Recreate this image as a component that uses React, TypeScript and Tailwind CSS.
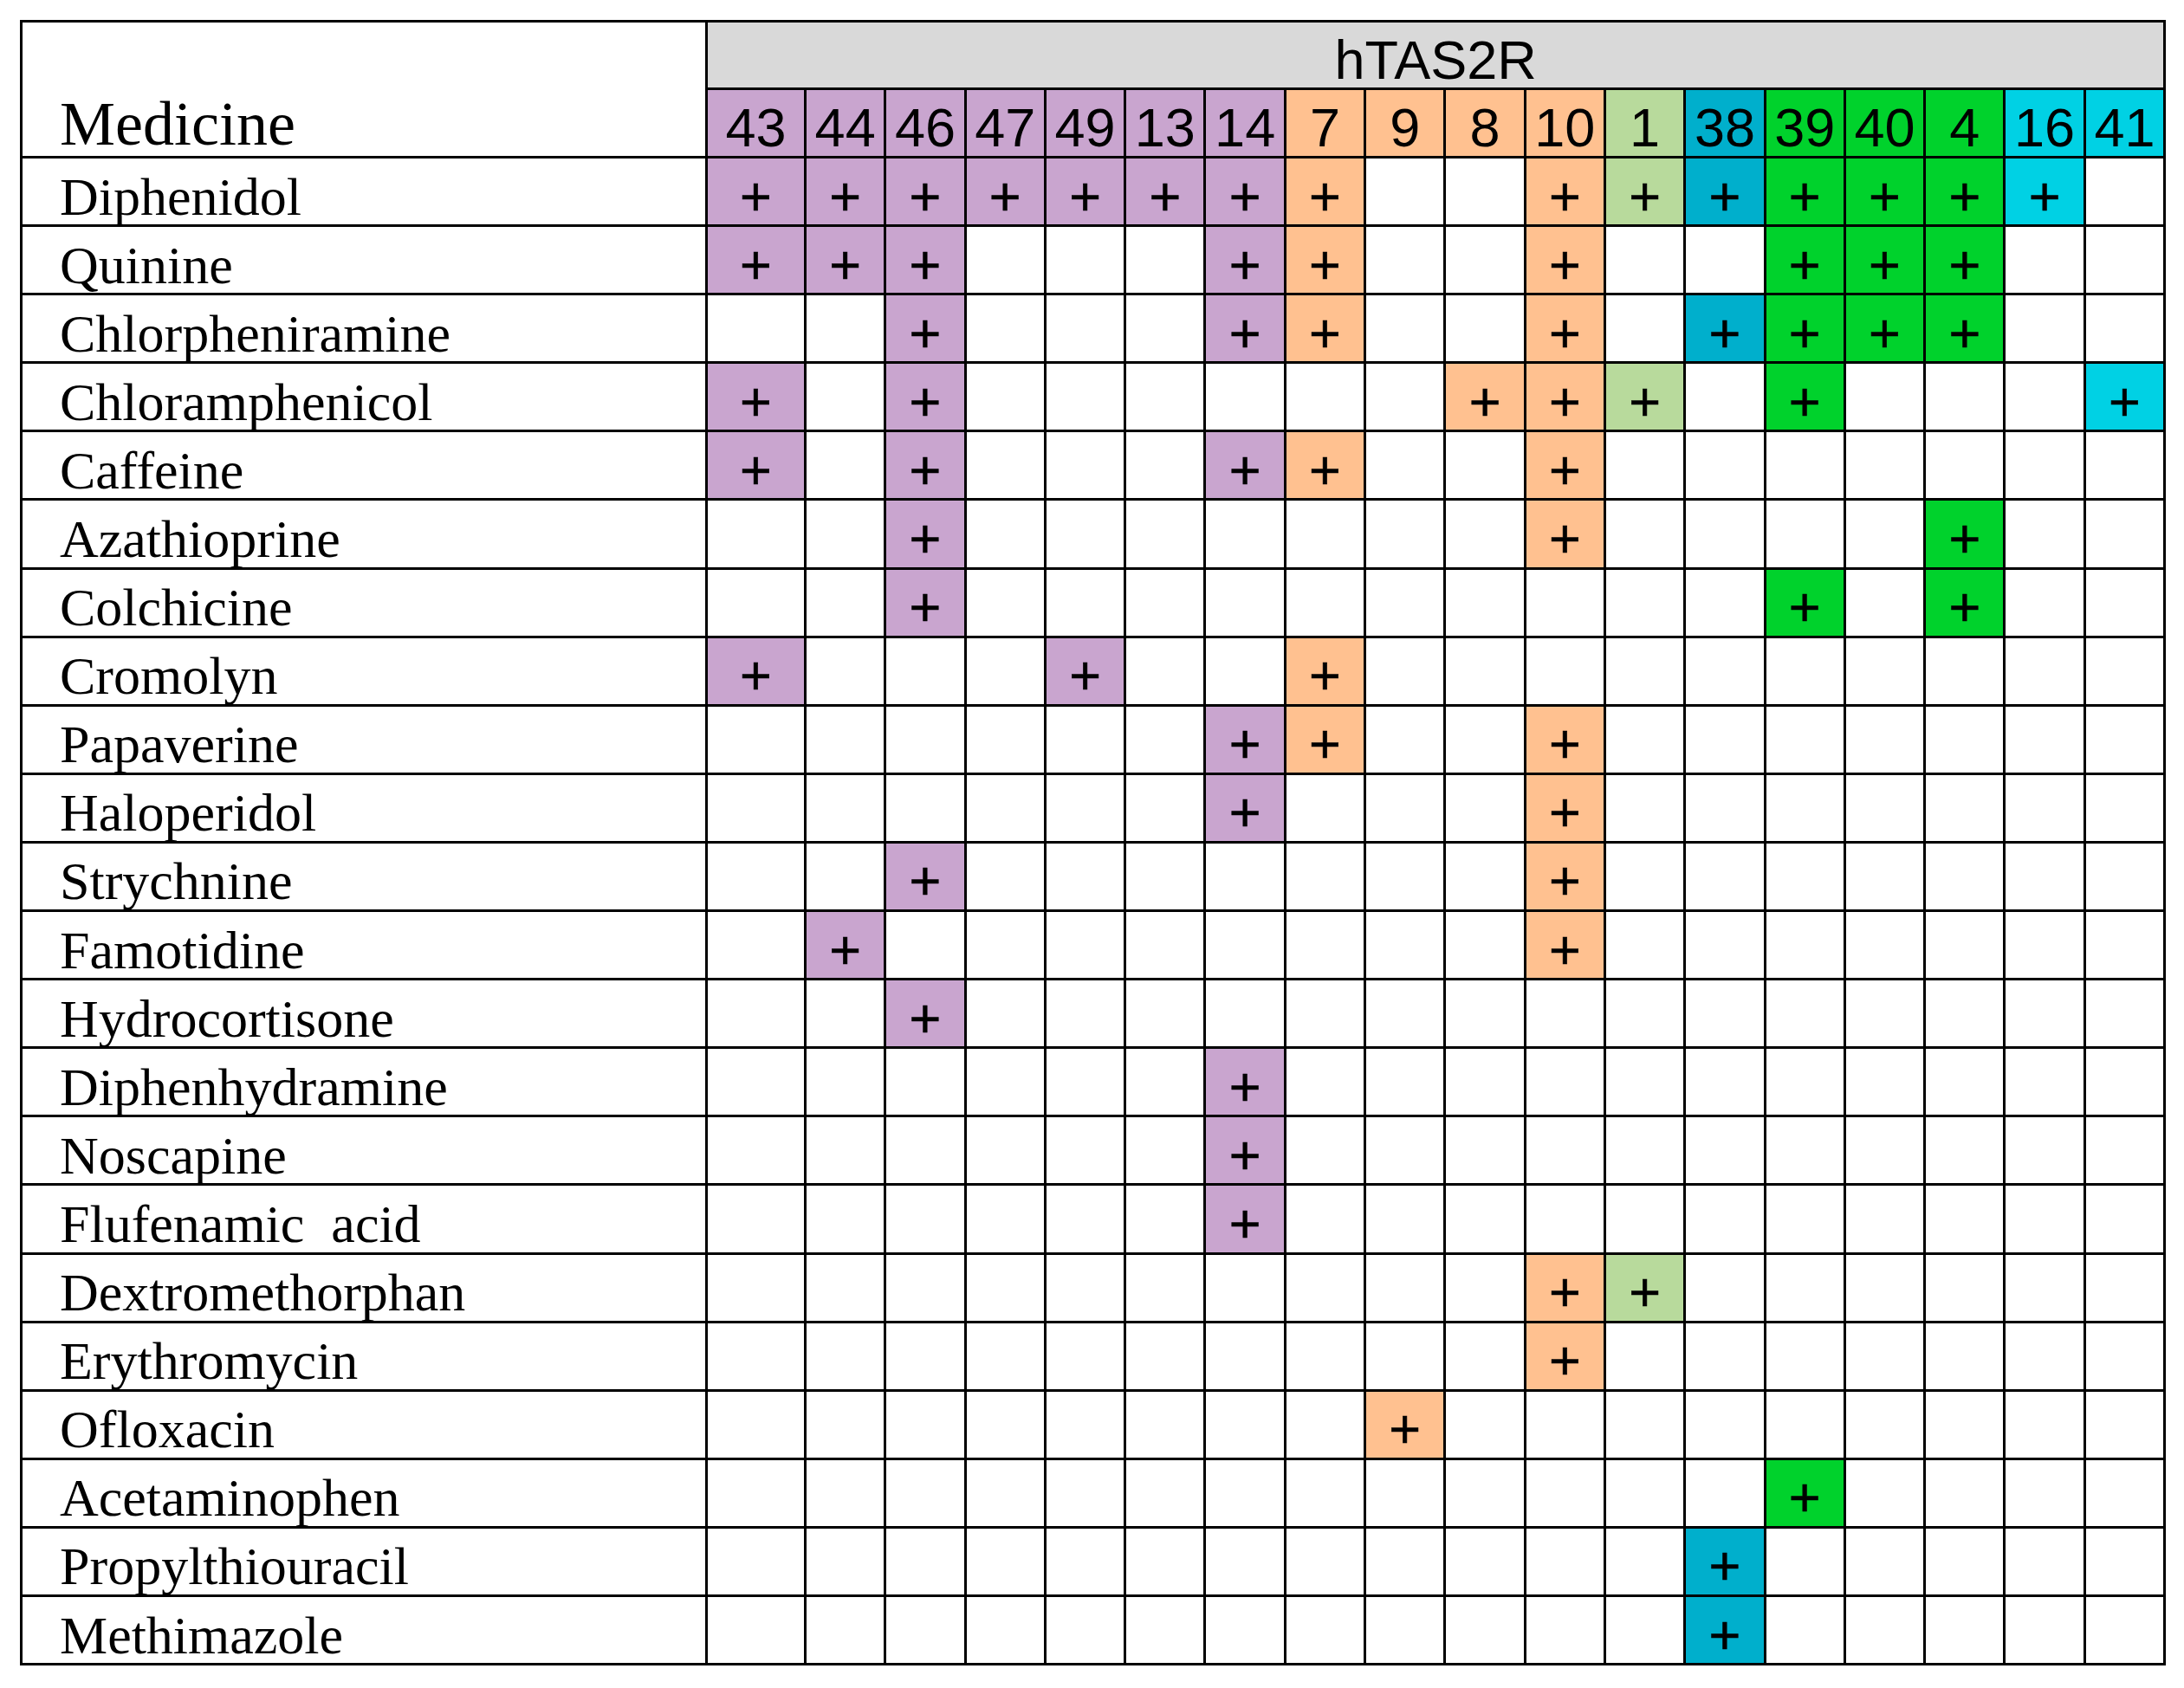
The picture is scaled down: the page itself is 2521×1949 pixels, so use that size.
import React from "react";

const PURPLE = "bg-[#c9a5cf]";
const ORANGE = "bg-[#ffc190]";
const LGREEN = "bg-[#b8da9c]";
const TEAL = "bg-[#00afcc]";
const GREEN = "bg-[#00d22c]";
const CYAN = "bg-[#00d1e4]";

const cols: { n: string; bg: string }[] = [
  { n: "43", bg: PURPLE },
  { n: "44", bg: PURPLE },
  { n: "46", bg: PURPLE },
  { n: "47", bg: PURPLE },
  { n: "49", bg: PURPLE },
  { n: "13", bg: PURPLE },
  { n: "14", bg: PURPLE },
  { n: "7", bg: ORANGE },
  { n: "9", bg: ORANGE },
  { n: "8", bg: ORANGE },
  { n: "10", bg: ORANGE },
  { n: "1", bg: LGREEN },
  { n: "38", bg: TEAL },
  { n: "39", bg: GREEN },
  { n: "40", bg: GREEN },
  { n: "4", bg: GREEN },
  { n: "16", bg: CYAN },
  { n: "41", bg: CYAN },
];

const rows: [string, string[]][] = [
  ["Diphenidol", ["43", "44", "46", "47", "49", "13", "14", "7", "10", "1", "38", "39", "40", "4", "16"]],
  ["Quinine", ["43", "44", "46", "14", "7", "10", "39", "40", "4"]],
  ["Chlorpheniramine", ["46", "14", "7", "10", "38", "39", "40", "4"]],
  ["Chloramphenicol", ["43", "46", "8", "10", "1", "39", "41"]],
  ["Caffeine", ["43", "46", "14", "7", "10"]],
  ["Azathioprine", ["46", "10", "4"]],
  ["Colchicine", ["46", "39", "4"]],
  ["Cromolyn", ["43", "49", "7"]],
  ["Papaverine", ["14", "7", "10"]],
  ["Haloperidol", ["14", "10"]],
  ["Strychnine", ["46", "10"]],
  ["Famotidine", ["44", "10"]],
  ["Hydrocortisone", ["46"]],
  ["Diphenhydramine", ["14"]],
  ["Noscapine", ["14"]],
  ["Flufenamic  acid", ["14"]],
  ["Dextromethorphan", ["10", "1"]],
  ["Erythromycin", ["10"]],
  ["Ofloxacin", ["9"]],
  ["Acetaminophen", ["39"]],
  ["Propylthiouracil", ["38"]],
  ["Methimazole", ["38"]],
];

export default function App() {
  return (
    <div className="w-[2521px] h-[1949px] bg-white pt-[23px] pl-[23px]">
      <table className="table-fixed border-collapse w-[2475px] text-black">
        <colgroup>
          <col className="w-[791px]" />
          <col className="w-[114px]" />
          {cols.slice(1).map((c) => (
            <col key={c.n} className="w-[92.3px]" />
          ))}
        </colgroup>
        <tbody>
          <tr className="h-[78px]">
            <td
              rowSpan={2}
              className="border-[3px] border-black align-bottom pl-[43px] pb-[1px] font-['Liberation_Serif','Times_New_Roman',serif] text-[72px] leading-none"
            >
              Medicine
            </td>
            <td
              colSpan={18}
              className="border-[3px] border-black bg-[#d9d9d9] text-center align-middle pt-[11px] font-['Liberation_Sans',Arial,sans-serif] text-[63px] leading-[62px]"
            >
              hTAS2R
            </td>
          </tr>
          <tr className="h-[79px]">
            {cols.map((c) => (
              <td
                key={c.n}
                className={`border-[3px] border-black ${c.bg} text-center align-middle pt-[10px] font-['Liberation_Sans',Arial,sans-serif] text-[63px] leading-[62px] whitespace-nowrap`}
              >
                {c.n}
              </td>
            ))}
          </tr>
          {rows.map(([name, hits]) => (
            <tr key={name} className="h-[79.1px]">
              <td className="border-[3px] border-black align-middle pl-[43px] pt-[11px] font-['Liberation_Serif','Times_New_Roman',serif] text-[62px] leading-[62px] whitespace-pre">
                {name}
              </td>
              {cols.map((c) => {
                const on = hits.includes(c.n);
                return (
                  <td
                    key={c.n}
                    className={`border-[3px] border-black ${on ? c.bg : "bg-white"} text-center align-middle pt-[11px] font-['Liberation_Sans',Arial,sans-serif] text-[63px] leading-[62px] [-webkit-text-stroke:0.6px_black]`}
                  >
                    {on ? "+" : ""}
                  </td>
                );
              })}
            </tr>
          ))}
        </tbody>
      </table>
    </div>
  );
}
